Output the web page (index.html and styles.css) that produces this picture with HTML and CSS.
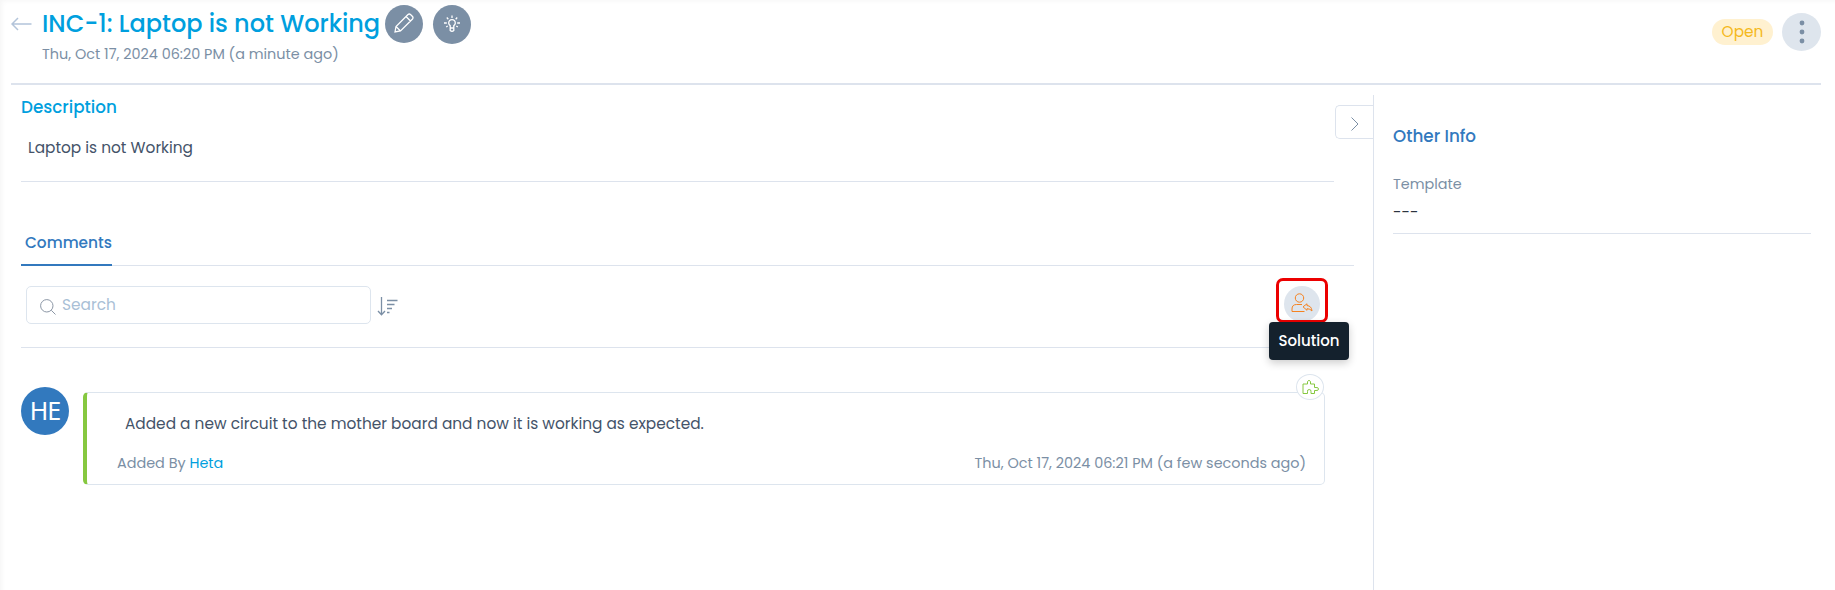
FILE: index.html
```html
<!DOCTYPE html>
<html lang="en">
<head>
    <meta charset="UTF-8">
    <meta name="viewport" content="width=device-width, initial-scale=1.0">
    <title>INC-1: Laptop is not Working</title>
    <link rel="stylesheet" href="styles.css">
</head>
<body>
    <header class="header">
        <svg class="back" width="21" height="14" viewBox="0 0 21 14"><path d="M20.500 7H1M7 1L1 7l6 6"/></svg>
        <div class="heading">
            <div class="title-row">
                <h1>INC-1: Laptop is not Working</h1>
                <button class="round dark pencil">
                    <svg width="20" height="20" viewBox="0 0 20 20"><path d="M1 19l1-5.500L14 1.500q1.300-1 2.500 0l2 2q1 1.200 0 2.500L6.500 18zM2 13.500l4.500 4.500M12 3.500l4.500 4.500"/></svg>
                </button>
                <button class="round dark bulb">
                    <svg width="18" height="18" viewBox="0 0 18 18"><path d="M7.200 13v-2.400a3.300 3.300 0 1 1 3.600 0V13zM7.200 13v2.500q1.800 1.500 3.600 0V13M9 .5v2.500M3.800 2.500l1.500 1.700M14.200 2.500l-1.500 1.700M1 8h2.800M14.200 8H17M3.200 12l1.500-1M14.800 12l-1.500-1"/></svg>
                </button>
            </div>
            <p class="date">Thu, Oct 17, 2024 06:20 PM (a minute ago)</p>
        </div>
        <span class="status">Open</span>
        <button class="round light">
            <svg width="6" height="24" viewBox="0 0 6 24"><circle cx="3" cy="3" r="2.400"/><circle cx="3" cy="12" r="2.400"/><circle cx="3" cy="21" r="2.400"/></svg>
        </button>
    </header>

    <div class="content">
        <main class="main">
            <section class="description">
                <h2>Description</h2>
                <p>Laptop is not Working</p>
            </section>

            <nav class="tabs">
                <a class="tab">Comments</a>
            </nav>

            <div class="toolbar">
                <div class="search">
                    <svg width="16" height="16" viewBox="0 0 16 16"><circle cx="6.800" cy="6.800" r="6.200"/><path d="M11.300 11.300l4.200 4.200"/></svg>
                    <span>Search</span>
                </div>
                <svg class="sort" width="21" height="19" viewBox="0 0 21 19"><path d="M4.500 0v17.500M1 14l3.500 3.800L8 14M10 3.500h10.500M10 7.500h7.500M10 11.500h5M10 15.500h2.500"/></svg>
                <div class="solution">
                    <div class="marker">
                        <span class="person">
                            <svg width="22" height="20" viewBox="0 0 22 20"><circle cx="8.500" cy="5" r="4.200"/><path d="M13.500 18.500H1V16q0-4.500 4.500-4.500h5.500M12 13.800l4-3v1.800q4.500.2 5 5.400-1.800-2.300-5-2.300v1.600z"/></svg>
                        </span>
                    </div>
                    <div class="tooltip">Solution</div>
                </div>
            </div>

            <div class="comment">
                <div class="avatar">HE</div>
                <div class="card">
                    <span class="badge">
                        <svg width="17" height="16" viewBox="0 0 17 16"><path d="M1 5h4.500V2.500q1.500-2.500 3 0V5h4v3.500h1.500q2.500-.3 2.500 1.500t-2.500 1.500h-1.500v3H9v-1.800q.3-2.200-1.800-2.200t-1.700 2.200v1.800H1z"/></svg>
                    </span>
                    <p class="comment-text">Added a new circuit to the mother board and now it is working as expected.</p>
                    <div class="comment-foot">
                        <span>Added By <a>Heta</a></span>
                        <span>Thu, Oct 17, 2024 06:21 PM (a few seconds ago)</span>
                    </div>
                </div>
            </div>
        </main>

        <aside class="side">
            <button class="toggle">
                <svg width="8" height="14" viewBox="0 0 8 14"><path d="M.5.5L7 7l-6.500 6.500"/></svg>
            </button>
            <h2>Other Info</h2>
            <div class="field">
                <label>Template</label>
                <p>---</p>
            </div>
        </aside>
    </div>
</body>
</html>
```
FILE: styles.css
```css
* {
    box-sizing: border-box;
}
body {
    margin: 0;
    height: 590px;
    overflow: hidden;
    font-family: Poppins, Inter, sans-serif;
    font-size: 15.36px;
    color: #445369;
    background: #fff;
    box-shadow: inset 5px 4px 5px -3px #f6f6f6;
    display: flex;
    flex-direction: column;
    white-space: nowrap;
}
h1, h2, p {
    margin: 0;
}
svg {
    display: block;
    fill: none;
    stroke: currentColor;
    flex: none;
}
button {
    border: 0;
    padding: 0;
    font: inherit;
}

/* header */
.header {
    height: 85px;
    margin: 0 14px 0 11px;
    border-bottom: 2px solid #dde3ed;
    display: flex;
    align-items: flex-start;
}
.back {
    margin: 17px 10px 0 0;
    color: #b3c4da;
    stroke-width: 1.5;
}
.heading {
    flex: 1;
}
.title-row {
    display: flex;
    height: 44px;
    padding-top: 5px;
}
h1 {
    width: 343px;
    font-size: 24px;
    font-weight: 500;
    line-height: 38px;
    color: #009fde;
}
.round {
    width: 38px;
    height: 38px;
    border-radius: 50%;
    display: flex;
    align-items: center;
    justify-content: center;
}
.dark {
    background: #7b8fa5;
    color: #fff;
    margin-right: 10px;
}
.dark svg {
    stroke-width: 1.3;
}
.pencil {
    padding-bottom: 2px;
}
.bulb {
    height: 39px;
    padding-bottom: 2px;
}
.light {
    width: 39px;
    margin-top: 13px;
    padding-bottom: 1px;
    background: #dee5ed;
    color: #7b8fa5;
}
.light svg {
    fill: currentColor;
    stroke: none;
}
.date {
    font-size: 14.4px;
    line-height: 20px;
    color: #7b8fa5;
}
.status {
    width: 61px;
    height: 26px;
    margin: 19px 9px 0 0;
    border-radius: 13px;
    background: #fff1d0;
    color: #f5b91d;
    line-height: 26px;
    text-align: center;
}

/* body */
.content {
    flex: 1;
    display: flex;
}
.main {
    width: 1373px;
    padding-left: 21px;
}
.description {
    width: 1313px;
    height: 97px;
    border-bottom: 1px solid #dde3ed;
}
h2 {
    font-size: 16.8px;
    font-weight: 500;
    line-height: 24px;
}
.description h2 {
    padding-top: 10px;
    color: #009fde;
}
.description p {
    padding: 17px 0 0 7px;
    line-height: 24px;
}
.tabs {
    display: flex;
    width: 1333px;
    height: 84px;
    padding-top: 47px;
    border-bottom: 1px solid #dde3ed;
}
.tab {
    width: 91px;
    height: 37px;
    padding-left: 4px;
    border-bottom: 2px solid #3279be;
    color: #3279be;
    font-weight: 500;
    line-height: 28px;
}
.toolbar {
    display: flex;
    width: 1313px;
    height: 82px;
    padding: 20px 0 0 5px;
    border-bottom: 1px solid #dde3ed;
}
.search {
    display: flex;
    width: 345px;
    height: 38px;
    padding-left: 13px;
    border: 1px solid #dde5ee;
    border-radius: 5px;
    line-height: 36px;
    color: #a9bfd6;
}
.search svg {
    margin: 12px 6px 0 0;
    color: #8b96a5;
}
.sort {
    margin: 11px 0 0 6px;
    color: #7b8fa5;
    stroke-width: 1.3;
}
.solution {
    position: relative;
    margin: -8px 6px 0 auto;
}
.marker {
    width: 52px;
    height: 45px;
    border: 3px solid #ec0000;
    border-radius: 7px;
    padding: 5px 0 0 5px;
    overflow: hidden;
}
.person {
    display: flex;
    align-items: center;
    justify-content: center;
    width: 36px;
    height: 36px;
    padding-bottom: 2px;
    border-radius: 50%;
    background: #dee5ed;
    color: #f58220;
}
.tooltip {
    position: absolute;
    top: 44px;
    left: -7px;
    width: 80px;
    height: 38px;
    border-radius: 4px;
    background: #14212d;
    color: #fff;
    font-size: 15px;
    font-weight: 500;
    line-height: 37px;
    text-align: center;
    box-shadow: 0 3px 8px rgba(0, 0, 0, 0.2);
}

/* comments */
.comment {
    display: flex;
    padding-top: 39px;
}
.avatar {
    width: 48px;
    height: 48px;
    border-radius: 50%;
    background: #3279be;
    color: #fff;
    font: 25px/47px "Noto Sans", sans-serif;
    letter-spacing: -1px;
    text-align: center;
}
.card {
    position: relative;
    width: 1242px;
    height: 93px;
    margin: 5px 0 0 14px;
    border: 1px solid #dde5ee;
    border-left: 4px solid #86c840;
    border-radius: 5px;
}
.badge {
    position: absolute;
    top: -19px;
    right: 0;
    display: flex;
    align-items: center;
    justify-content: center;
    width: 28px;
    height: 26px;
    border: 1px solid #dde5ee;
    border-radius: 50%;
    background: #fff;
    color: #86c840;
}
.comment-text {
    padding: 19px 0 0 38px;
    line-height: 24px;
}
.comment-foot {
    display: flex;
    justify-content: space-between;
    padding: 15px 18px 0 30px;
    font-size: 14.4px;
    line-height: 24px;
    color: #7b8fa5;
}
.comment-foot a {
    color: #009fde;
}

/* side panel */
.side {
    position: relative;
    flex: 1;
    margin-top: 10px;
    padding: 29px 24px 0 19px;
    border-left: 1px solid #dde3ed;
}
.side h2 {
    color: #3279be;
}
.toggle {
    position: absolute;
    top: 10px;
    left: -39px;
    width: 38px;
    height: 34px;
    padding: 3px 0 0 15px;
    border: 1px solid #dde3ed;
    border-right: 0;
    border-radius: 5px 0 0 5px;
    background: #fff;
    color: #7b8fa5;
}
.field {
    height: 86px;
    padding-top: 24px;
    border-bottom: 1px solid #dde3ed;
    line-height: 24px;
}
.field label {
    display: block;
    font-size: 14.4px;
    color: #7b8fa5;
}
.field p {
    padding-top: 5px;
    color: #2b3440;
}
```
